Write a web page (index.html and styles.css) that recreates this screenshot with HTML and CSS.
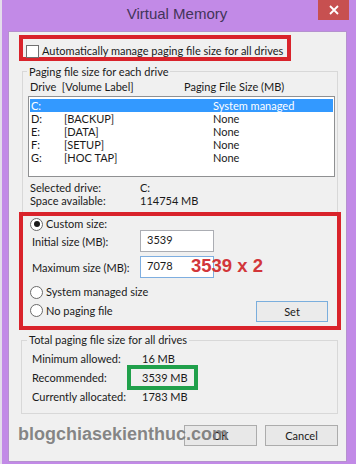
FILE: index.html
```html
<!DOCTYPE html>
<html>
<head>
<meta charset="utf-8">
<link rel="stylesheet" href="styles.css">
</head>
<body>
<div class="window">
  <div class="titlebar">
    <span class="title">Virtual Memory</span>
    <div class="close"><svg width="10" height="10" viewBox="0 0 10 10"><path d="M1 1L9 9M9 1L1 9" stroke="#fff" stroke-width="1.8" fill="none"/></svg></div>
  </div>
  <div class="client">
    <div class="redbox auto">
      <div class="check"><span class="cb"></span><span>Automatically manage paging file size for all drives</span></div>
    </div>
    <div class="group g1">
      <div class="legend">Paging file size for each drive</div>
      <div class="listhead"><span>Drive&nbsp; [Volume Label]</span><span>Paging File Size (MB)</span></div>
      <div class="list">
        <div class="row sel"><span>C:</span><span></span><span>System managed</span></div>
        <div class="row"><span>D:</span><span>[BACKUP]</span><span>None</span></div>
        <div class="row"><span>E:</span><span>[DATA]</span><span>None</span></div>
        <div class="row"><span>F:</span><span>[SETUP]</span><span>None</span></div>
        <div class="row"><span>G:</span><span>[HOC TAP]</span><span>None</span></div>
      </div>
      <div class="info">
        <span>Selected drive:</span><span>C:</span>
        <span>Space available:</span><span>114754 MB</span>
      </div>
    </div>
    <div class="redbox custom">
      <div class="radio r-custom"><span class="rb on"></span><span>Custom size:</span></div>
      <div class="field f-init"><span class="flabel">Initial size (MB):</span><span class="input">3539</span></div>
      <div class="field f-max"><span class="flabel">Maximum size (MB):</span><span class="input focus">7078</span><span class="note">3539 x 2</span></div>
      <div class="radio r-sys"><span class="rb"></span><span>System managed size</span></div>
      <div class="lastrow">
        <div class="radio r-none"><span class="rb"></span><span>No paging file</span></div>
        <div class="btn set">Set</div>
      </div>
    </div>
    <div class="group g2">
      <div class="legend">Total paging file size for all drives</div>
      <div class="trow"><span class="tl">Minimum allowed:</span><span>16 MB</span></div>
      <div class="trow"><span class="tl">Recommended:</span><span class="green">3539 MB</span></div>
      <div class="trow"><span class="tl">Currently allocated:</span><span>1783 MB</span></div>
    </div>
    <div class="buttons">
      <div class="btn">OK</div>
      <div class="btn">Cancel</div>
    </div>
    <div class="watermark">blogchiasekienthuc.com</div>
  </div>
</div>
</body>
</html>
```

FILE: styles.css
```css
* { box-sizing: border-box; }
html, body { margin: 0; padding: 0; }
body {
  width: 356px;
  height: 464px;
  overflow: hidden;
  background: #e4dceb;
  font-family: Lato, "Liberation Sans", sans-serif;
  font-size: 11px;
  color: #1a1a1a;
  white-space: nowrap;
}
.window {
  margin-left: 2px;
  width: 354px;
  height: 464px;
  background: #c28ae7;
  position: relative;
}
.titlebar {
  height: 31px;
  display: flex;
  justify-content: center;
  align-items: flex-start;
  padding-top: 5px;
  padding-right: 4px;
}
.title {
  font-family: "Liberation Sans", sans-serif;
  font-size: 15px;
  line-height: 18px;
  color: #43345a;
}
.close {
  position: absolute;
  top: 0;
  right: 7px;
  width: 31px;
  height: 20px;
  background: #c75050;
  display: flex;
  align-items: center;
  justify-content: center;
}
.client {
  margin-left: 6px;
  width: 339px;
  height: 431px;
  background: #f0f0f0;
  border: 1px solid #b591cf;
  position: relative;
}
.redbox {
  border: 4px solid #d9232b;
  margin-left: 10px;
}
.auto {
  margin-top: 3px;
  width: 272px;
  height: 26px;
}
.check {
  display: flex;
  align-items: center;
  padding-left: 3px;
  padding-top: 5px;
  line-height: 14px;
}
.cb {
  width: 13px;
  height: 13px;
  background: #fff;
  border: 1px solid #707070;
  margin-right: 3px;
  flex: none;
}
.group {
  border: 1px solid #d8d8d8;
}
.legend {
  width: max-content;
  background: #f0f0f0;
  padding: 0 2px;
  line-height: 14px;
}
.g1 {
  margin-left: 13px;
  margin-top: 10px;
  width: 316px;
  height: 141px;
  border-bottom: none;
}
.g1 .legend {
  margin-top: -7px;
  margin-left: 4px;
}
.listhead {
  display: grid;
  grid-template-columns: 154px 1fr;
  padding-left: 7px;
  line-height: 14px;
  margin-top: 1px;
}
.list {
  margin-left: 5px;
  margin-top: 2px;
  width: 307px;
  height: 81px;
  background: #fff;
  border: 1px solid #8f9092;
  padding: 2px 1px 0 1px;
}
.row {
  display: grid;
  grid-template-columns: 33px 149px 1fr;
  height: 13px;
  line-height: 13px;
  padding-left: 1px;
}
.row.sel {
  background: #3399ff;
  color: #fff;
}
.info {
  display: grid;
  grid-template-columns: 110px 1fr;
  line-height: 13px;
  padding-left: 7px;
  margin-top: 4px;
}
.custom {
  width: 322px;
  height: 118px;
}
.radio {
  display: flex;
  align-items: center;
  line-height: 14px;
  padding-left: 7px;
}
.rb {
  width: 13px;
  height: 13px;
  border-radius: 50%;
  border: 1px solid #6a6a6a;
  background: #fff;
  margin-right: 3px;
  display: flex;
  align-items: center;
  justify-content: center;
  flex: none;
}
.rb.on::after {
  content: "";
  width: 6px;
  height: 6px;
  border-radius: 50%;
  background: #1a1a1a;
}
.r-custom {
  margin-top: 1px;
}
.field {
  display: flex;
  align-items: center;
  height: 22px;
  padding-left: 9px;
}
.f-init { margin-top: -1px; }
.f-max { margin-top: 4px; }
.flabel {
  width: 108px;
}
.input {
  width: 74px;
  height: 22px;
  background: #fff;
  border: 1px solid #abadb3;
  padding-left: 6px;
  line-height: 18px;
  flex: none;
}
.input.focus {
  border-color: #7eaee0;
}
.note {
  margin-left: -23px;
  font-family: "Liberation Sans", sans-serif;
  font-weight: bold;
  font-size: 18.5px;
  color: #d2363a;
  position: relative;
  top: -1px;
}
.r-sys { margin-top: 7px; }
.lastrow {
  display: flex;
  justify-content: space-between;
  align-items: center;
  margin-top: 2px;
  padding-right: 9px;
}
.r-none { margin-top: -2px; }
.btn {
  width: 73px;
  height: 21px;
  border: 1px solid #acacac;
  background: #e8e8e8;
  display: flex;
  align-items: center;
  justify-content: center;
  line-height: 14px;
}
.btn.set {
  width: 72px;
  border-color: #7aaedd;
  background: #ebebeb;
}
.g2 {
  margin-left: 12px;
  margin-top: 10px;
  width: 317px;
  height: 74px;
}
.g2 .legend {
  margin-top: -8px;
  margin-left: 5px;
}
.trow {
  display: flex;
  align-items: center;
  height: 19px;
  padding-left: 10px;
}
.legend + .trow { margin-top: 2px; }
.tl { width: 110px; }
.green {
  display: inline-block;
  border: 4px solid #20a04b;
  height: 25px;
  margin: -3px 0 -3px -15px;
  padding: 0 6px 0 11px;
  line-height: 17px;
}
.buttons {
  display: flex;
  justify-content: flex-end;
  gap: 8px;
  margin-top: 11px;
  padding-right: 8px;
}
.watermark {
  position: absolute;
  left: 9px;
  top: 391px;
  font-family: "Liberation Sans", sans-serif;
  font-weight: bold;
  font-size: 18px;
  line-height: 22px;
  color: rgba(118, 118, 118, 0.88);
}
```
